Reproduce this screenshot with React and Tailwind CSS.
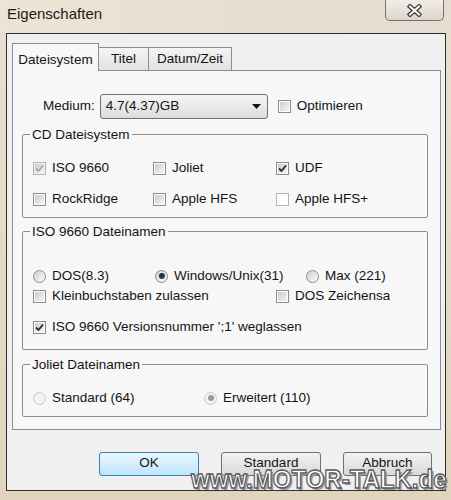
import React from 'react';

const Check = ({ checked, disabled, faded }) => {
  const outer = faded
    ? 'border-[#b5b5b5] bg-white'
    : disabled
      ? 'border-[#b0b0b0] bg-[#f4f4f4]'
      : 'border-[#8a8c8e] bg-[#fdfdfd]';
  const inner = faded
    ? 'bg-white'
    : 'bg-gradient-to-br from-[#c9ccd0] to-[#f5f5f5]';
  return (
    <span className={`flex h-[13px] w-[13px] shrink-0 border p-[1px] ${outer}`}>
      <span className={`relative flex h-full w-full items-center justify-center ${inner}`}>
        {checked && (
          <svg width="9" height="9" viewBox="0 0 9 9" className="absolute">
            <path
              d="M1 4.5 L3.5 7 L8 1.5"
              fill="none"
              stroke={disabled ? '#a8a8a8' : '#1c2a3c'}
              strokeWidth="1.8"
            />
          </svg>
        )}
      </span>
    </span>
  );
};

const Radio = ({ selected, disabled }) => (
  <span
    className={`flex h-[13px] w-[13px] shrink-0 items-center justify-center rounded-full border ${
      disabled ? 'border-[#c8c8c8] bg-[#f3f3f3]' : 'border-[#8a8c8e] bg-gradient-to-br from-[#cfd2d6] to-[#fafafa]'
    }`}
  >
    {selected && (
      <span
        className={`h-[6px] w-[6px] rounded-full ${
          disabled ? 'bg-[#9a9a9a]' : 'bg-gradient-to-br from-[#0c1a2c] to-[#3a5a7a]'
        }`}
      />
    )}
  </span>
);

const Option = ({ control, children, clip }) => (
  <div className="flex h-[20px] items-center gap-[6px]">
    {control}
    <span className={clip ? 'w-[95px] overflow-hidden whitespace-nowrap' : 'whitespace-nowrap'}>{children}</span>
  </div>
);

const Group = ({ title, className, children }) => (
  <fieldset className={`ml-[9px] w-[406px] rounded-[2px] border border-[#8d8d8d] ${className}`}>
    <legend className="ml-[7px] px-[2px] leading-[15px]">{title}</legend>
    {children}
  </fieldset>
);

export default function App() {
  return (
    <div className="relative h-[500px] w-[451px] overflow-hidden bg-gradient-to-b from-[#eadfd0] to-[#e2d3bf] font-['Liberation_Sans',Arial,sans-serif] text-[13.5px] text-[#141414]">
      {/* title bar */}
      <div className="flex h-[33px] items-start justify-between bg-gradient-to-r from-[#ede4d8] via-[#e8dfd3] to-[#e6ddd2]">
        <span className="pl-[7px] pt-[5px] text-[15px] leading-[18px] text-[#1a1a1a]">Eigenschaften</span>
        <div className="mr-[7px] flex h-[21px] w-[59px] items-center justify-center rounded-b-[5px] border border-t-0 border-[#77726c] bg-gradient-to-b from-[#f2ede7] to-[#ddd5cb]">
          <svg width="17" height="13" viewBox="0 0 17 13">
            <path d="M4 2.5 L13 10.5 M13 2.5 L4 10.5" stroke="#3a3a3a" strokeWidth="4.5" strokeLinecap="square" />
            <path d="M4 2.5 L13 10.5 M13 2.5 L4 10.5" stroke="#ffffff" strokeWidth="2" strokeLinecap="square" />
          </svg>
        </div>
      </div>

      {/* client area */}
      <div className="ml-[6px] h-[458px] w-[440px] border border-[#2e2e2e] bg-[#f0f0f0] pl-[5px] pt-[9px]">
        {/* tabs */}
        <div className="flex h-[27px] items-end">
          <div className="relative z-10 -mb-px flex h-[28px] w-[87px] items-start justify-center border border-b-0 border-[#8c8e94] bg-[#f7f7f7] pt-[6px]">
            Dateisystem
          </div>
          <div className="flex h-[23px] w-[50px] items-center justify-center border border-b-0 border-l-0 border-[#8c8e94] bg-gradient-to-b from-[#f4f4f4] to-[#e2e2e2]">
            Titel
          </div>
          <div className="flex h-[23px] w-[83px] items-center justify-center border border-b-0 border-l-0 border-[#8c8e94] bg-gradient-to-b from-[#f4f4f4] to-[#e2e2e2]">
            Datum/Zeit
          </div>
        </div>

        {/* panel */}
        <div className="h-[360px] w-[429px] border border-[#8c8e94] bg-[#f7f7f7]">
          <div className="ml-[30px] mt-[23px] flex h-[25px] items-center">
            <span>Medium:</span>
            <div className="ml-[5px] flex h-[25px] w-[168px] items-center justify-between rounded-[3px] border border-[#6f6f6f] bg-gradient-to-b from-[#f6f6f6] to-[#dcdcdc] pl-[5px] pr-[6px]">
              <span>4.7(4.37)GB</span>
              <svg width="9" height="5" viewBox="0 0 9 5">
                <path d="M0 0 H9 L4.5 5 Z" fill="#111" />
              </svg>
            </div>
            <div className="ml-[10px]">
              <Option control={<Check />}>Optimieren</Option>
            </div>
          </div>

          <Group title="CD Dateisystem" className="mt-[8px] h-[91px]">
            <div className="grid grid-cols-[120px_123px_1fr] gap-y-[11px] pl-[10px] pt-[16px]">
              <Option control={<Check checked disabled />}>ISO 9660</Option>
              <Option control={<Check />}>Joliet</Option>
              <Option control={<Check checked />}>UDF</Option>
              <Option control={<Check />}>RockRidge</Option>
              <Option control={<Check />}>Apple HFS</Option>
              <Option control={<Check faded />}>Apple HFS+</Option>
            </div>
          </Group>

          <Group title="ISO 9660 Dateinamen" className="mt-[6px] h-[126px]">
            <div className="pl-[10px] pt-[27px]">
              <div className="grid grid-cols-[122px_151px_1fr]">
                <Option control={<Radio />}>DOS(8.3)</Option>
                <Option control={<Radio selected />}>Windows/Unix(31)</Option>
                <Option control={<Radio />}>Max (221)</Option>
              </div>
              <div className="grid grid-cols-[243px_1fr]">
                <Option control={<Check />}>Kleinbuchstaben zulassen</Option>
                <Option control={<Check />} clip>DOS Zeichensatz</Option>
              </div>
              <div className="mt-[11px]">
                <Option control={<Check checked />}>ISO 9660 Versionsnummer ';1' weglassen</Option>
              </div>
            </div>
          </Group>

          <Group title="Joliet Dateinamen" className="mt-[7px] h-[60px]">
            <div className="grid grid-cols-[171px_1fr] pl-[10px] pt-[16px]">
              <Option control={<Radio disabled />}>Standard (64)</Option>
              <Option control={<Radio selected disabled />}>Erweitert (110)</Option>
            </div>
          </Group>
        </div>

        {/* buttons */}
        <div className="ml-[87px] mt-[22px] flex gap-[22px]">
          <button className="h-[24px] w-[100px] rounded-[3px] border border-[#3c7fb1] bg-gradient-to-b from-[#eaf6fd] to-[#bee6fd] pb-[2px]">
            OK
          </button>
          <button className="h-[24px] w-[100px] rounded-[3px] border border-[#707070] bg-gradient-to-b from-[#f2f2f2] to-[#d9d9d9] pb-[2px]">
            Standard
          </button>
          <button className="h-[24px] w-[89px] rounded-[3px] border border-[#707070] bg-gradient-to-b from-[#f2f2f2] to-[#d9d9d9] pb-[2px]">
            Abbruch
          </button>
        </div>
      </div>

      {/* watermark */}
      <div className="absolute left-[191px] top-[468px] origin-bottom-left scale-y-110 whitespace-nowrap text-[24px] font-bold leading-[24px] tracking-[0px] text-white [-webkit-text-stroke:1.2px_#5a5a5a] [text-shadow:2px_2px_0_#9a9a9a]">
        www.MOTOR-TALK.de
      </div>
    </div>
  );
}
